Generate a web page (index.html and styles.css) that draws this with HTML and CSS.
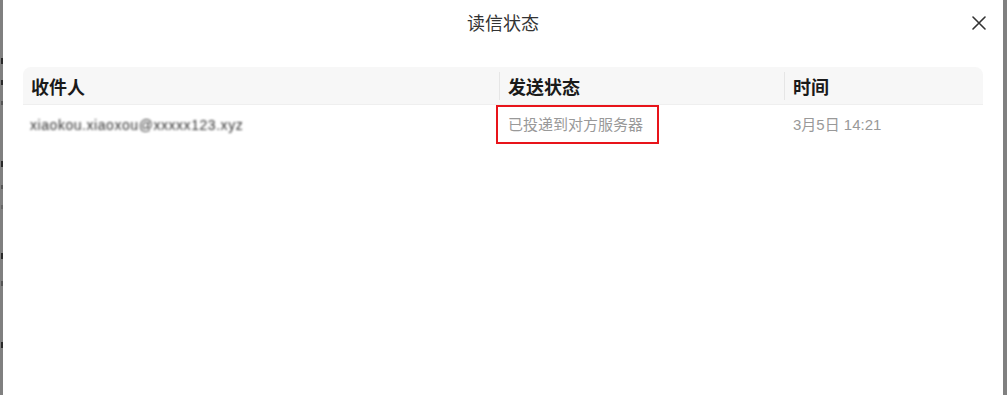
FILE: index.html
```html
<!DOCTYPE html>
<html lang="zh">
<head>
<meta charset="utf-8">
<title>读信状态</title>
<link rel="stylesheet" href="styles.css">
</head>
<body>
<div class="page">
  <div class="backdrop-left">
    <i class="mark m1"></i><i class="mark m2"></i><i class="mark m3"></i><i class="mark m4"></i><i class="mark m5"></i><i class="mark m6"></i><i class="mark m7"></i><i class="mark m8"></i><i class="mark m9"></i>
  </div>
  <div class="modal">
    <div class="modal-head">
      <div class="modal-title">读信状态</div>
      <button class="close" aria-label="关闭">
        <svg width="14" height="14" viewBox="0 0 14 14"><path d="M1 1L13 13M13 1L1 13" stroke="#333" stroke-width="1.6" stroke-linecap="round" fill="none"/></svg>
      </button>
    </div>
    <div class="table">
      <div class="thead">
        <div class="th c1">收件人</div>
        <div class="th c2">发送状态</div>
        <div class="th c3">时间</div>
      </div>
      <div class="trow">
        <div class="td c1"><span class="blur">xiaokou.xiaoxou@xxxxx123.xyz</span></div>
        <div class="td c2"><span class="status">已投递到对方服务器</span></div>
        <div class="td c3">3月5日 14:21</div>
      </div>
    </div>
  </div>
  <div class="backdrop-right"></div>
</div>
</body>
</html>
```

FILE: styles.css
```css
* { box-sizing: border-box; }
html, body { margin: 0; padding: 0; }
body {
  width: 1007px;
  height: 395px;
  overflow: hidden;
  background: #808080;
  font-family: "Noto Sans CJK SC", "Liberation Sans", sans-serif;
}
.page {
  display: flex;
  height: 395px;
}
.backdrop-left {
  width: 3px;
  overflow: hidden;
  background: #808080;
  display: flex;
  flex-direction: column;
  align-items: flex-end;
  padding-top: 58px;
}
.mark {
  display: block;
  width: 2px;
  height: 6px;
  background: #2a2a2a;
}
.m1 { margin-top: 0; }
.m2 { margin-top: 16px; height: 5px; }
.m3 { margin-top: 16px; height: 4px; background: #555; }
.m4 { margin-top: 56px; }
.m5 { margin-top: 18px; height: 4px; background: #555; }
.m6 { margin-top: 16px; height: 4px; background: #666; }
.m7 { margin-top: 44px; }
.m8 { margin-top: 22px; height: 5px; background: #555; }
.m9 { margin-top: 56px; }
.backdrop-right {
  width: 4px;
  background: #808080;
}
.modal {
  width: 1000px;
  background: #fff;
  padding: 0 20px 0 20px;
  position: relative;
}
.modal-head {
  height: 67px;
  display: flex;
  align-items: flex-start;
  justify-content: center;
}
.modal-title {
  margin-top: 9px;
  font-size: 18px;
  line-height: 26px;
  color: #333;
}
.close {
  position: absolute;
  right: 16px;
  top: 15px;
  width: 16px;
  height: 16px;
  padding: 0;
  border: 0;
  background: transparent;
  display: flex;
  align-items: center;
  justify-content: center;
}
.table {
  width: 960px;
}
.thead {
  display: flex;
  height: 38px;
  background: #f7f7f7;
  border-radius: 8px 8px 0 0;
  border-bottom: 1px solid #efefef;
  align-items: center;
}
.c1 { width: 476px; }
.c2 { width: 285px; }
.c3 { width: 199px; }
.th {
  font-size: 18px;
  font-weight: 700;
  color: #1a1a1a;
  line-height: 28px;
  padding-left: 8px;
}
.th.c2, .th.c3 {
  border-left: 1px solid #e6e6e6;
}
.trow {
  display: flex;
  height: 39px;
  align-items: center;
}
.td {
  font-size: 15px;
  color: #999;
  line-height: 22px;
}
.td.c1 { padding-left: 7px; }
.td.c3 { padding-left: 9px; font-family: "Liberation Sans", "Noto Sans CJK SC", sans-serif; }
.td.c2 { padding-left: 0; }
.blur {
  color: #333;
  font-family: "Liberation Sans", sans-serif;
  font-size: 14px;
  filter: blur(0.9px);
  letter-spacing: 0.55px;
}
.status {
  display: inline-block;
  margin-left: -3px;
  border: 2px solid #e8141a;
  padding: 6px 14px 7px 10px;
  color: #999;
}
```
